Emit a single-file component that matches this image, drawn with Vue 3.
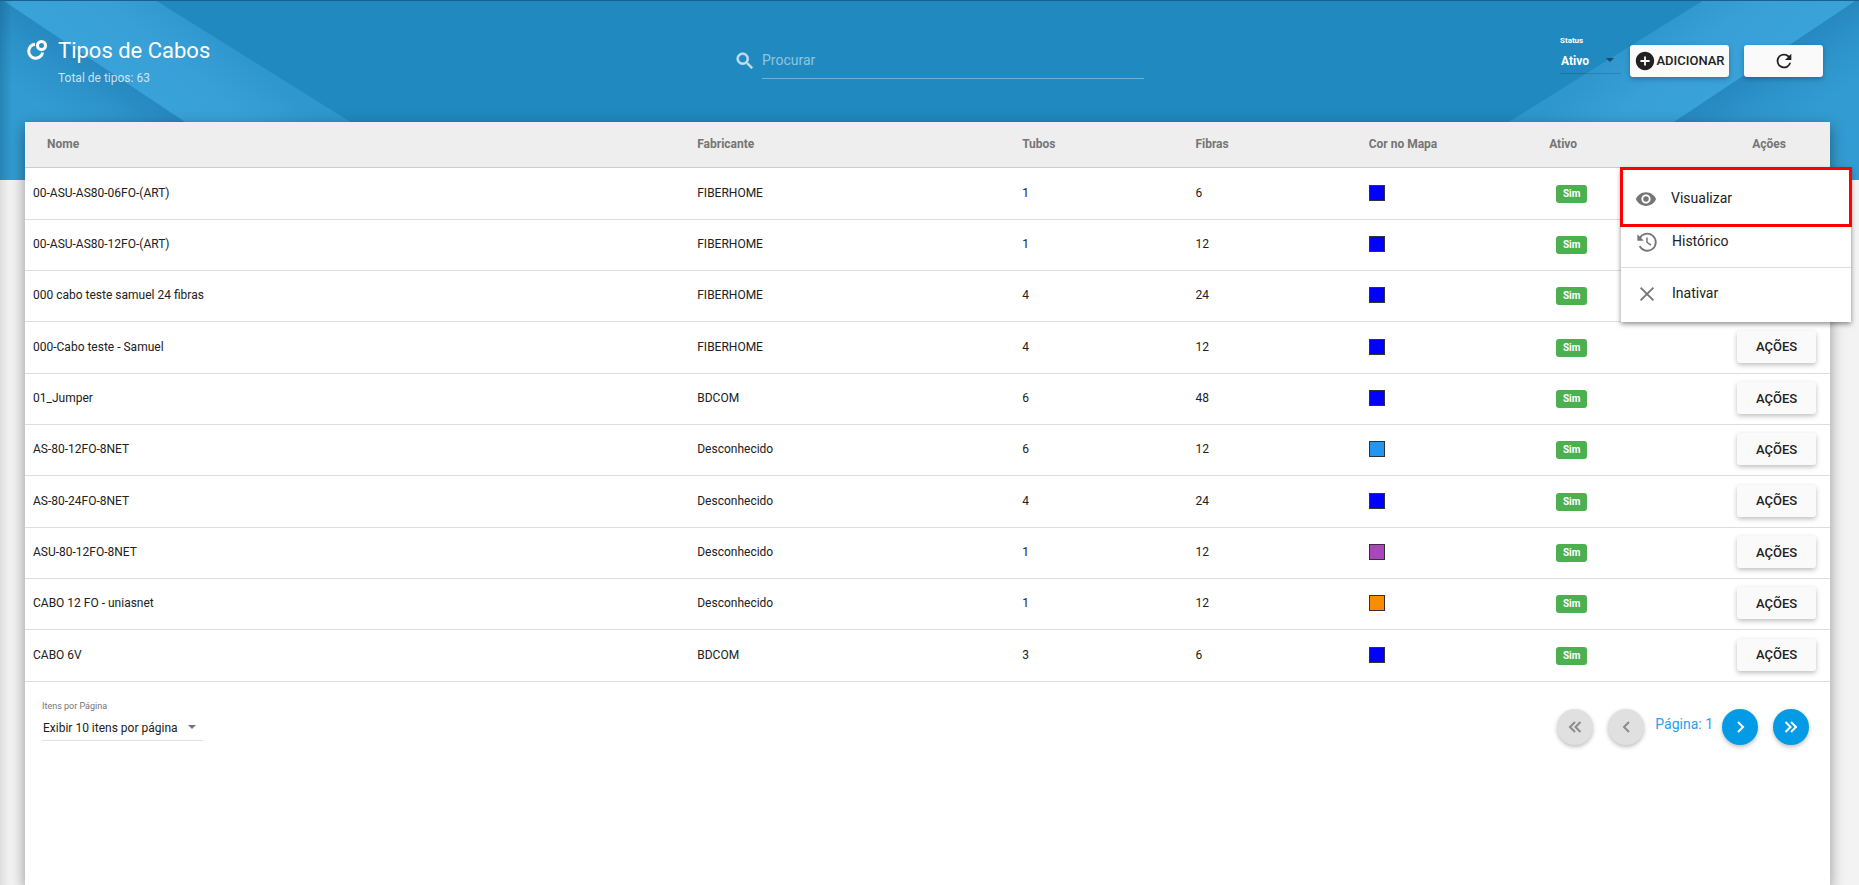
<script setup>
import { ref } from 'vue'

const search = ref('')
const status = ref('Ativo')
const perPage = ref('10')

const rows = [
  { name: '00-ASU-AS80-06FO-(ART)', maker: 'FIBERHOME', tubes: 1, fibers: 6, color: '#0000ff' },
  { name: '00-ASU-AS80-12FO-(ART)', maker: 'FIBERHOME', tubes: 1, fibers: 12, color: '#0000ff' },
  { name: '000 cabo teste samuel 24 fibras', maker: 'FIBERHOME', tubes: 4, fibers: 24, color: '#0000ff' },
  { name: '000-Cabo teste - Samuel', maker: 'FIBERHOME', tubes: 4, fibers: 12, color: '#0000ff' },
  { name: '01_Jumper', maker: 'BDCOM', tubes: 6, fibers: 48, color: '#0000ff' },
  { name: 'AS-80-12FO-8NET', maker: 'Desconhecido', tubes: 6, fibers: 12, color: '#2196f3' },
  { name: 'AS-80-24FO-8NET', maker: 'Desconhecido', tubes: 4, fibers: 24, color: '#0000ff' },
  { name: 'ASU-80-12FO-8NET', maker: 'Desconhecido', tubes: 1, fibers: 12, color: '#ab47bc' },
  { name: 'CABO 12 FO - uniasnet', maker: 'Desconhecido', tubes: 1, fibers: 12, color: '#fb8c00' },
  { name: 'CABO 6V', maker: 'BDCOM', tubes: 3, fibers: 6, color: '#0000ff' },
]
</script>

<template>
  <div class="page">
    <div class="banner" aria-hidden="true">
      <svg v-for="side in ['left', 'right']" :key="side" :class="['rays', side]" width="360" height="180" viewBox="0 0 360 180">
        <defs>
          <linearGradient :id="side + '-fold'" gradientUnits="userSpaceOnUse" x1="96" y1="61" x2="58" y2="118">
            <stop offset="0" stop-color="#2688bf" />
            <stop offset="0.5" stop-color="#2d94ca" />
            <stop offset="1" stop-color="#329bd1" />
          </linearGradient>
          <linearGradient :id="side + '-ray'" gradientUnits="userSpaceOnUse" x1="170" y1="130" x2="235" y2="50">
            <stop offset="0" stop-color="#39a2d9" />
            <stop offset="0.55" stop-color="#38a0d7" />
            <stop offset="1" stop-color="#2f97cd" />
          </linearGradient>
          <linearGradient :id="side + '-edge'" x1="0" y1="0" x2="1" y2="0">
            <stop offset="0" stop-color="#0d4a70" stop-opacity="0.3" />
            <stop offset="1" stop-color="#0d4a70" stop-opacity="0" />
          </linearGradient>
        </defs>
        <path :fill="`url(#${side}-ray)`" d="M2 0H155L360 128V180H270z" />
        <path :fill="`url(#${side}-fold)`" d="M0 0H2L272 180H0z" />
        <path v-if="side === 'left'" :fill="`url(#${side}-edge)`" d="M0 0H12V180H0z" />
      </svg>
    </div>

    <header class="header">
      <div class="title-block">
        <svg class="logo" width="20" height="20" viewBox="0 0 20 20" fill="none" stroke="#fff" stroke-width="3">
          <circle cx="14.5" cy="5.5" r="4" />
          <path d="M8 4.2A7 7 0 1 0 15.6 12.4" />
        </svg>
        <div>
          <h1>Tipos de Cabos</h1>
          <p>Total de tipos: 63</p>
        </div>
      </div>

      <div class="search">
        <label for="search">
          <svg width="22" height="22" viewBox="0 0 24 24" fill="#c3e0ef" stroke="#c3e0ef" stroke-width="0.7" aria-label="Procurar">
            <path d="M15.5 14h-.79l-.28-.27A6.47 6.47 0 0 0 16 9.5 6.5 6.5 0 1 0 9.5 16c1.61 0 3.09-.59 4.23-1.57l.27.28v.79l5 4.99L20.49 19l-4.99-5zm-6 0C7.01 14 5 11.99 5 9.5S7.01 5 9.5 5 14 7.01 14 9.5 11.99 14 9.5 14z" />
          </svg>
        </label>
        <input id="search" v-model="search" type="text" placeholder="Procurar" />
      </div>

      <div class="tools">
        <div class="field status">
          <label for="status">Status</label>
          <div class="select">
            <select id="status" v-model="status">
              <option>Ativo</option>
              <option>Inativo</option>
            </select>
            <svg width="8" height="4" viewBox="0 0 8 4"><path d="M0 0h8L4 4z" /></svg>
          </div>
        </div>
        <button class="btn add" type="button">
          <svg width="22" height="22" viewBox="0 0 24 24" fill="#212121">
            <path d="M12 2C6.48 2 2 6.48 2 12s4.48 10 10 10 10-4.48 10-10S17.52 2 12 2zm5 11h-4v4h-2v-4H7v-2h4V7h2v4h4v2z" />
          </svg>
          <span>ADICIONAR</span>
        </button>
        <button class="btn refresh" type="button" aria-label="Atualizar">
          <svg width="22" height="22" viewBox="0 0 24 24" fill="#212121">
            <path d="M17.65 6.35A7.96 7.96 0 0 0 12 4a8 8 0 1 0 7.73 10h-2.08A6 6 0 1 1 12 6c1.66 0 3.14.69 4.22 1.78L13 11h7V4l-2.35 2.35z" />
          </svg>
        </button>
      </div>
    </header>

    <main class="card">
      <table>
        <colgroup>
          <col class="c-name" /><col class="c-maker" /><col class="c-num" /><col class="c-num" />
          <col class="c-color" /><col class="c-active" /><col />
        </colgroup>
        <thead>
          <tr>
            <th class="first">Nome</th>
            <th>Fabricante</th>
            <th>Tubos</th>
            <th>Fibras</th>
            <th>Cor no Mapa</th>
            <th>Ativo</th>
            <th class="last">Ações</th>
          </tr>
        </thead>
        <tbody>
          <tr v-for="row in rows" :key="row.name">
            <td>{{ row.name }}</td>
            <td>{{ row.maker }}</td>
            <td>{{ row.tubes }}</td>
            <td>{{ row.fibers }}</td>
            <td><span class="swatch" :style="{ backgroundColor: row.color }"></span></td>
            <td><span class="badge">Sim</span></td>
            <td class="actions"><button class="btn action" type="button">AÇÕES</button></td>
          </tr>
        </tbody>
      </table>

      <div class="menu" role="menu">
        <button class="highlight" type="button" role="menuitem">
          <svg width="22" height="22" viewBox="0 0 24 24" fill="#757575">
            <path d="M12 4.5C7 4.5 2.73 7.61 1 12c1.73 4.39 6 7.5 11 7.5s9.27-3.11 11-7.5c-1.73-4.39-6-7.5-11-7.5zM12 17c-2.76 0-5-2.24-5-5s2.24-5 5-5 5 2.24 5 5-2.24 5-5 5zm0-8a3 3 0 1 0 0 6 3 3 0 0 0 0-6z" />
          </svg>
          <span>Visualizar</span>
        </button>
        <button class="history" type="button" role="menuitem">
          <svg width="22" height="22" viewBox="0 0 24 24" fill="none" stroke="#757575" stroke-width="2">
            <path d="M4 8A9.3 9.3 0 1 1 4 16.5" />
            <path d="M12 7v5.5l4.5 3" stroke-width="1.6" />
            <path d="M1.5 3.5v7h7z" fill="#757575" stroke="none" />
          </svg>
          <span>Histórico</span>
        </button>
        <button class="disable" type="button" role="menuitem">
          <svg width="22" height="22" viewBox="0 0 24 24" fill="none" stroke="#757575" stroke-width="2">
            <path d="M5 5l14 14M19 5L5 19" />
          </svg>
          <span>Inativar</span>
        </button>
      </div>

      <footer class="footer">
        <div class="field per-page">
          <label for="per-page">Itens por Página</label>
          <div class="select">
            <select id="per-page" v-model="perPage">
              <option value="10">Exibir 10 itens por página</option>
              <option value="20">Exibir 20 itens por página</option>
            </select>
            <svg width="8" height="4" viewBox="0 0 8 4"><path d="M0 0h8L4 4z" /></svg>
          </div>
        </div>
        <nav class="pager" aria-label="Paginação">
          <button type="button" disabled aria-label="Primeira página">
            <svg width="14" height="12" viewBox="0 0 14 12"><path d="M7 1L2 6l5 5M12.500 1l-5 5 5 5" /></svg>
          </button>
          <button type="button" disabled aria-label="Página anterior">
            <svg width="14" height="12" viewBox="0 0 14 12"><path d="M10 1L5 6l5 5" /></svg>
          </button>
          <span>Página: 1</span>
          <button type="button" aria-label="Próxima página">
            <svg width="14" height="12" viewBox="0 0 14 12"><path d="M5 1l5 5-5 5" /></svg>
          </button>
          <button type="button" aria-label="Última página">
            <svg width="14" height="12" viewBox="0 0 14 12"><path d="M1.500 1l5 5-5 5M7 1l5 5-5 5" /></svg>
          </button>
        </nav>
      </footer>
    </main>
  </div>
</template>

<style>
body {
  margin: 0;
  background: #f3f3f3;
}
</style>

<style scoped>
.page {
  position: relative;
  box-sizing: border-box;
  min-height: 100vh;
  display: flex;
  flex-direction: column;
  padding: 0 29px 0 25px;
  overflow: hidden;
  font-family: Roboto, "Liberation Sans", sans-serif;
  font-size: 12px;
  color: #212121;
  background: linear-gradient(90deg, #dedede, #f3f3f3 10px);
}

button,
input,
select {
  font: inherit;
  color: inherit;
  margin: 0;
}

button {
  cursor: pointer;
}

.banner {
  position: absolute;
  inset: 0 0 auto 0;
  height: 180px;
  background: #2089bf;
  overflow: hidden;
}

.banner::after {
  content: "";
  position: absolute;
  inset: 0 0 auto 0;
  height: 1px;
  background: #17628a;
}

.rays {
  position: absolute;
  top: 0;
}

.rays.left {
  left: 0;
}

.rays.right {
  right: 0;
  transform: scaleX(-1);
}

.header {
  position: relative;
  box-sizing: border-box;
  height: 122px;
  display: grid;
  grid-template-columns: 1fr 440px 1fr;
  padding-right: 7px;
  align-items: start;
}

.title-block {
  display: flex;
  gap: 11px;
  padding: 36px 0 0 2px;
  color: #fff;
}

.logo {
  margin-top: 4px;
}

h1 {
  margin: 0;
  font-size: 22px;
  line-height: 30px;
  font-weight: 400;
}

p {
  margin: 4px 0 0;
  font-size: 12px;
  line-height: 16px;
  color: rgba(255, 255, 255, 0.75);
}

.search {
  display: flex;
  align-items: center;
  gap: 6px;
  padding: 42px 0 0 30px;
}

.search label {
  display: flex;
}

.search input {
  flex: 1;
  min-width: 0;
  height: 37px;
  box-sizing: border-box;
  padding: 0;
  border: 0;
  border-bottom: 1px solid rgba(255, 255, 255, 0.35);
  background: none;
  outline: 0;
  font-size: 14px;
  color: #fff;
}

.search input::placeholder {
  color: rgba(255, 255, 255, 0.5);
  opacity: 1;
}

.tools {
  display: flex;
  justify-content: flex-end;
  align-items: flex-start;
  padding-top: 36px;
}

.field {
  display: flex;
  flex-direction: column;
}

.field .select {
  display: flex;
  align-items: center;
  border-bottom: 1px solid #e0e0e0;
}

.field select {
  flex: 1;
  min-width: 0;
  appearance: none;
  border: 0;
  padding: 2px 0 0 1px;
  background: none;
  outline: 0;
}

.field svg {
  flex: none;
  fill: #757575;
}

.status {
  width: 61px;
  margin-right: 9px;
  color: #fff;
}

.status label {
  font-size: 8px;
  line-height: 10px;
  font-weight: 700;
}

.status .select {
  height: 27px;
  padding-right: 7px;
  border-color: rgba(0, 0, 0, 0.15);
}

.status select {
  font-weight: 700;
}

.status option {
  color: #212121;
}

.status svg {
  fill: #1c4a63;
}

.btn {
  display: inline-flex;
  align-items: center;
  justify-content: center;
  box-sizing: border-box;
  width: 79px;
  height: 32px;
  padding: 0;
  border: 0;
  border-radius: 3px;
  background: #fafafa;
  box-shadow: 0 2px 5px rgba(0, 0, 0, 0.26);
  font-size: 13px;
  font-weight: 500;
}

.tools .btn {
  margin-top: 9px;
}

.tools .add {
  width: 99px;
  margin-right: 15px;
}

.add span {
  padding-bottom: 2px;
}

.card {
  position: relative;
  flex: 1;
  background: #fff;
  box-shadow: 0 5px 14px rgba(0, 0, 0, 0.4);
}

table {
  width: 100%;
  table-layout: fixed;
  border-collapse: separate;
  border-spacing: 0;
}

.c-name { width: 36.8%; }
.c-maker { width: 18%; }
.c-num { width: 9.6%; }
.c-color { width: 10%; }
.c-active { width: 8%; }

th {
  box-sizing: border-box;
  height: 46px;
  padding: 0 8px 2px;
  background: #eee;
  border-bottom: 1px solid #ccc;
  text-align: left;
  font-weight: 700;
  color: #757575;
}

th.first {
  padding-left: 22px;
}

th.last {
  padding-right: 44px;
  text-align: right;
}

td {
  box-sizing: border-box;
  height: 51px;
  padding: 0 8px 2px;
  border-bottom: 1px solid #ddd;
}

tr:nth-child(3n + 1) td {
  height: 52px;
}

.swatch {
  display: block;
  box-sizing: border-box;
  width: 16px;
  height: 16px;
  border: 1px solid #333;
}

.badge {
  display: block;
  width: 31px;
  margin: 2px 0 0 7px;
  border-radius: 3px;
  background: #4caf50;
  color: #fff;
  text-align: center;
  font-size: 10px;
  line-height: 18px;
  font-weight: 700;
}

td.actions {
  padding-right: 14px;
  text-align: right;
}

.action {
  vertical-align: middle;
}

.menu {
  position: absolute;
  top: 46px;
  right: -21px;
  width: 230px;
  display: flex;
  flex-direction: column;
  background: #fff;
  box-shadow: 0 2px 5px rgba(0, 0, 0, 0.45);
}

.menu button {
  display: flex;
  align-items: center;
  gap: 14px;
  box-sizing: border-box;
  padding: 0 0 0 15px;
  border: 0;
  background: none;
  font-size: 14px;
  text-align: left;
}

.menu svg {
  margin-top: 2px;
}

.menu .highlight {
  height: 60px;
  margin: -1px -1px 0;
  border: 3px solid #f00;
  padding: 2px 0 0 12px;
}

.menu .history {
  height: 41px;
  padding-bottom: 12px;
  border-bottom: 1px solid #ddd;
}

.menu .disable {
  height: 54px;
  padding-bottom: 4px;
}

.footer {
  display: flex;
  justify-content: space-between;
  align-items: flex-start;
  padding: 17px 21px 0 17px;
}

.per-page {
  width: 161px;
}

.per-page label {
  font-size: 9px;
  line-height: 14px;
  color: #757575;
}

.per-page .select {
  height: 27px;
  padding-right: 7px;
}

.pager {
  display: flex;
  align-items: center;
  padding-top: 10px;
}

.pager button {
  display: flex;
  align-items: center;
  justify-content: center;
  width: 36px;
  height: 36px;
  padding: 0;
  border: 0;
  border-radius: 50%;
  background: #039be5;
  box-shadow: 0 2px 4px rgba(0, 0, 0, 0.26);
}

.pager button + button {
  margin-left: 15px;
}

.pager button:disabled {
  background: #e0e0e0;
}

.pager svg {
  fill: none;
  stroke: #fff;
  stroke-width: 2;
}

.pager button:disabled svg {
  stroke: #8c8c8c;
}

.pager span {
  margin: 0 9px 6px 11px;
  font-size: 14px;
  color: #1da1f2;
}
</style>
